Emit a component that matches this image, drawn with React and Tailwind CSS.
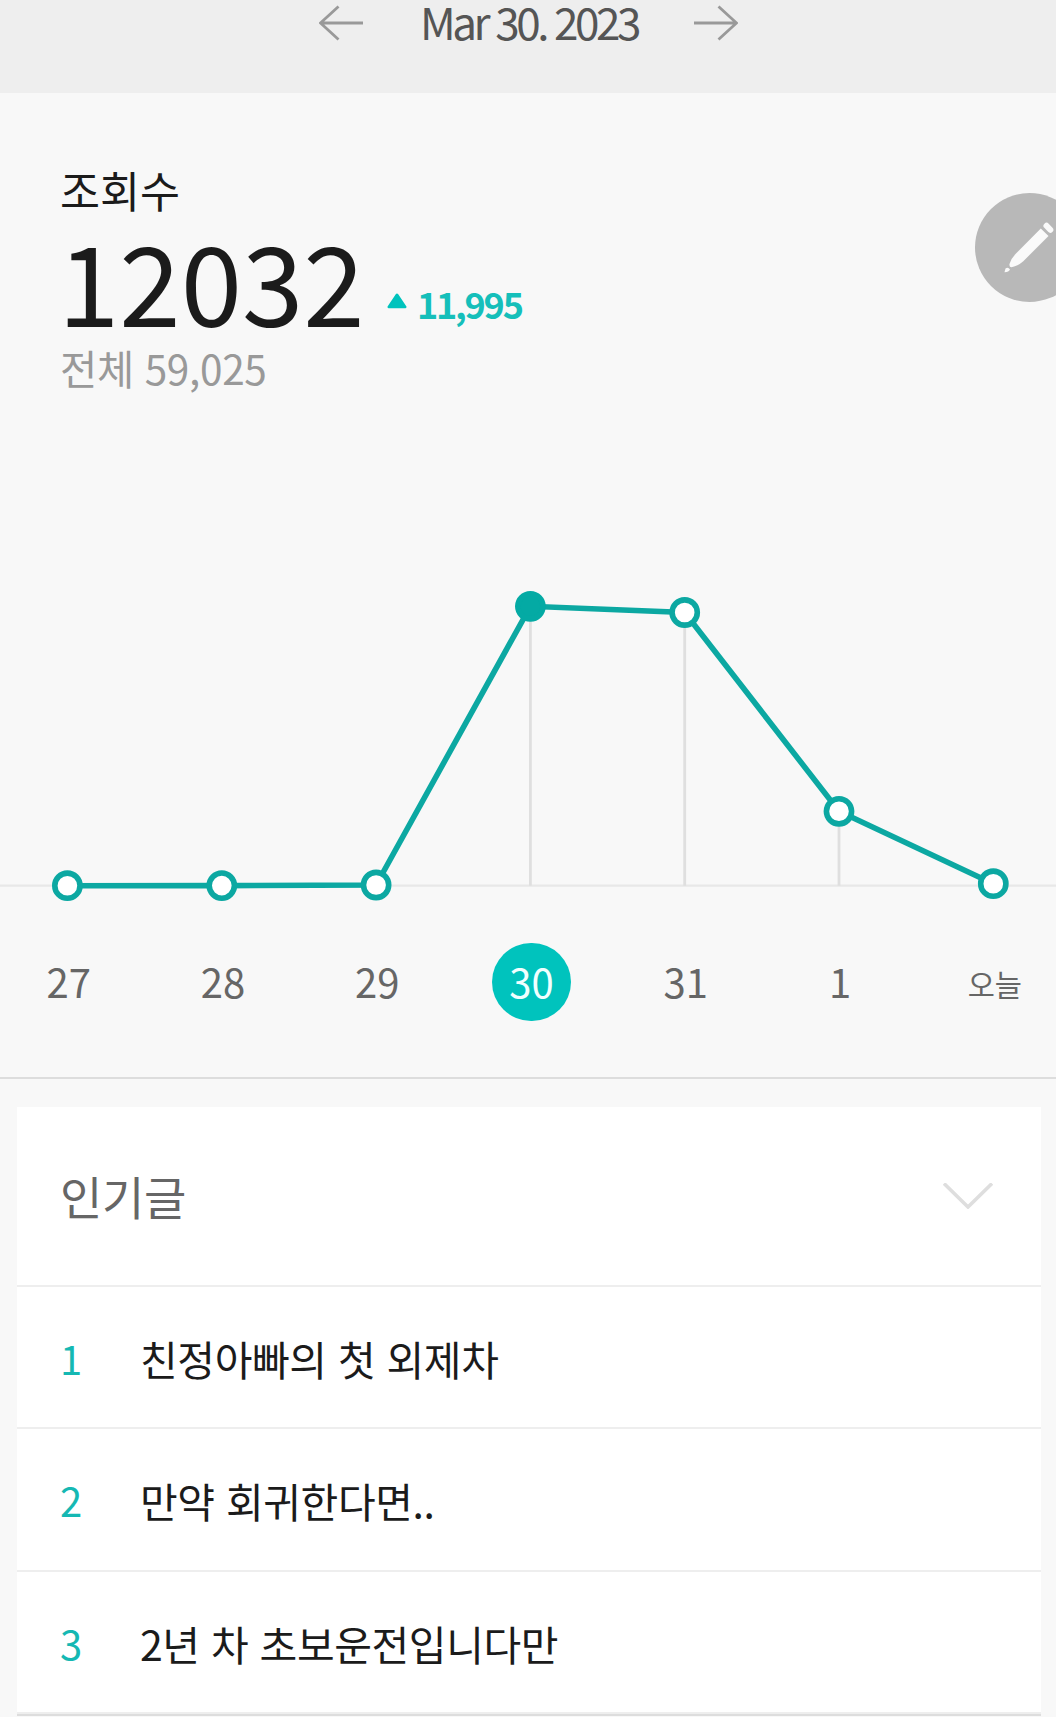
const points = [
  { x: 67.4, y: 885.7, label: '27' },
  { x: 221.8, y: 885.6, label: '28' },
  { x: 376.1, y: 885, label: '29' },
  { x: 530.4, y: 606.3, label: '30', active: true },
  { x: 684.7, y: 612.5, label: '31' },
  { x: 839, y: 811.3, label: '1' },
  { x: 993.3, y: 883.7, label: '오늘', small: true },
];

const BASELINE = 885.7;

const posts = ['친정아빠의 첫 외제차', '만약 회귀한다면..', '2년 차 초보운전입니다만'];

function DateBar() {
  return (
    <header className="flex h-[93px] items-start justify-center bg-[#eeeeee]">
      <svg className="mt-[3px] h-10 w-11 shrink-0" viewBox="0 0 44 40" fill="none" stroke="#999" strokeWidth="2.8">
        <path d="M44 20H2M19.5 3.5L1.5 20l18 16.5" />
      </svg>
      <h1 className="h-[42px] w-[331px] pl-[2px] text-center text-[44px] leading-[42px] tracking-[-3.4px] text-[#555] [word-spacing:1.5px]">
        Mar 30. 2023
      </h1>
      <svg className="mt-[3px] h-10 w-11 shrink-0" viewBox="0 0 44 40" fill="none" stroke="#999" strokeWidth="2.8">
        <path d="M0 20h42M24.5 3.5l18 16.5-18 16.5" />
      </svg>
    </header>
  );
}

function Summary() {
  return (
    <section className="h-[407px] pt-[71px] pl-[59px]">
      <div className="h-[56px] pl-px text-[43.5px] leading-[52px] text-[#1b1b1b]">조회수</div>
      <div className="flex h-[126px]">
        <div className="-ml-px w-[329px] text-[110.5px] leading-[119px] text-[#1b1b1b]">12032</div>
        <svg className="mt-[73px] h-4 w-5 shrink-0" viewBox="0 0 20 16">
          <path d="M10 1.8L18.2 14H1.8z" fill="#00c3bd" stroke="#00c3bd" strokeWidth="2.6" strokeLinejoin="round" />
        </svg>
        <div className="mt-[58px] ml-[10px] h-[50px] text-[36px] leading-[50px] font-bold tracking-[-2.2px] text-[#15bfba]">
          11,995
        </div>
      </div>
      <div className="h-[50px] pl-px text-[40.5px] leading-[43px] tracking-[-0.3px] text-[#999] [word-spacing:2px]">
        전체 59,025
      </div>
    </section>
  );
}

function Chart() {
  return (
    <svg className="block h-[421px] w-[1056px]" viewBox="0 500 1056 421" fill="none">
      <path d={`M0 ${BASELINE}H1056`} stroke="#e8e8e8" strokeWidth="2.2" />
      {points
        .filter((p) => BASELINE - p.y > 10)
        .map((p) => (
          <path key={p.label} d={`M${p.x} ${p.y}V${BASELINE}`} stroke="#dfdfdf" strokeWidth="2.8" />
        ))}
      <polyline points={points.map((p) => `${p.x},${p.y}`).join(' ')} stroke="#0ca8a2" strokeWidth="5.6" />
      {points.map((p) => (
        <circle
          key={p.label}
          cx={p.x}
          cy={p.y}
          r="12.6"
          fill={p.active ? '#04aaa4' : '#fff'}
          stroke={p.active ? '#04aaa4' : '#0ca8a2'}
          strokeWidth="5.6"
        />
      ))}
    </svg>
  );
}

function Days() {
  return (
    <div className="-ml-[8px] grid h-[156px] w-[1080px] grid-cols-7 pt-[22px]">
      {points.map((p) => (
        <div key={p.label} className="flex justify-center">
          {p.active ? (
            <span className="h-[78px] w-[79px] rounded-full bg-[#00c3bd] pr-px text-center text-[40px] leading-[77px] text-[#f0ffff]">
              {p.label}
            </span>
          ) : p.small ? (
            <span className="text-[29.5px] leading-[80px] text-[#666]">{p.label}</span>
          ) : (
            <span className="pr-px text-[40px] leading-[77px] text-[#666]">{p.label}</span>
          )}
        </div>
      ))}
    </div>
  );
}

function Popular() {
  return (
    <section className="mt-7 ml-[17px] w-[1024px] border-b-2 border-[#ddd] bg-white">
      <div className="flex h-[180px] items-start justify-between border-b-2 border-[#eee] pt-[59px] pr-[48px] pl-[43px]">
        <h2 className="text-[46px] leading-[58px] tracking-[-0.3px] text-[#666]">인기글</h2>
        <svg className="mt-[17px] h-[26px] w-[50px]" viewBox="0 0 50 26" fill="none" stroke="#dedede" strokeWidth="3.6">
          <path d="M1 0.5l24 23.5 24-23.5" />
        </svg>
      </div>
      {posts.map((title, i) => (
        <div
          key={title}
          className="flex h-[142px] border-b-2 border-[#eee] pl-[43px] text-[41px] nth-3:h-[143px]"
        >
          <span className="w-[80px] text-[40px] leading-[143px] text-[#15b8b3]">{i + 1}</span>
          <span className="leading-[142px] tracking-[-0.4px] text-[#1b1b1b] [word-spacing:2.5px]">{title}</span>
        </div>
      ))}
    </section>
  );
}

export default function App() {
  return (
    <main className="relative h-[1717px] w-[1056px] overflow-hidden bg-[#f8f8f8] font-['Noto_Sans_CJK_KR',sans-serif]">
      <DateBar />
      <Summary />
      <Chart />
      <Days />
      <div className="h-0.5 bg-[#ddd]" />
      <Popular />
      <button className="absolute top-[193px] left-[975px] h-[109px] w-[109px] rounded-full bg-[#b8b8b8]" aria-label="글쓰기">
        <svg className="h-[109px] w-[109px]" viewBox="0 0 109 109" fill="#fafafa">
          <path d="M65.8 35.5L73.5 43L48 68.5Q43 73 36.5 74.3Q34 74 34.5 71Q36 65.5 41 60.5Z" />
          <path d="M71.5 32.8L75.3 36.8" stroke="#fafafa" strokeWidth="6" strokeLinecap="round" />
          <path d="M29.5 79.2L30.5 75.5Q33 73.5 35 76.5Q34 79 29.5 79.2Z" />
        </svg>
      </button>
    </main>
  );
}
